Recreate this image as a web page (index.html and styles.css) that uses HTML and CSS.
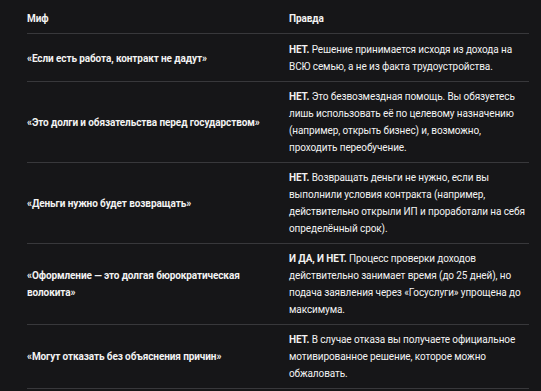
FILE: index.html
```html
<!DOCTYPE html>
<html lang="ru">
<head>
<meta charset="utf-8">
<link rel="stylesheet" href="styles.css">
</head>
<body>
<div class="wrap">
<table class="myths">
<thead>
<tr><th class="c1">Миф</th><th class="c2">Правда</th></tr>
</thead>
<tbody>
<tr><td class="c1">«Если есть работа, контракт не дадут»</td><td class="c2"><b>НЕТ.</b> Решение принимается исходя из дохода на ВСЮ семью, а не из факта трудоустройства.</td></tr>
<tr><td class="c1">«Это долги и обязательства перед государством»</td><td class="c2"><b>НЕТ.</b> Это безвозмездная помощь. Вы обязуетесь лишь использовать её по целевому назначению (например, открыть бизнес) и, возможно, проходить переобучение.</td></tr>
<tr><td class="c1">«Деньги нужно будет возвращать»</td><td class="c2"><b>НЕТ.</b> Возвращать деньги не нужно, если вы выполнили условия контракта (например, действительно открыли ИП и проработали на себя определённый срок).</td></tr>
<tr><td class="c1">«Оформление — это долгая бюрократическая волокита»</td><td class="c2"><b>И ДА, И НЕТ.</b> Процесс проверки доходов действительно занимает время (до 25 дней), но подача заявления через «Госуслуги» упрощена до максимума.</td></tr>
<tr><td class="c1">«Могут отказать без объяснения причин»</td><td class="c2"><b>НЕТ.</b> В случае отказа вы получаете официальное мотивированное решение, которое можно обжаловать.</td></tr>
</tbody>
</table>
</div>
</body>
</html>
```
FILE: styles.css
```css
html, body {
  margin: 0;
  background: #161618;
}
body {
  font-family: Roboto, "Noto Sans", sans-serif;
  font-size: 10px;
  line-height: 17px;
  letter-spacing: -0.1px;
  color: #f2f2f2;
}
.wrap {
  padding: 4px 12px 0 27px;
}
.myths {
  border-collapse: collapse;
  width: 502px;
  table-layout: fixed;
}
.myths th, .myths td {
  text-align: left;
  padding: 6px 0;
  border-bottom: 1px solid #38383b;
  vertical-align: middle;
}
.myths tbody tr:first-child td {
  padding-top: 7px;
}
.myths th {
  font-weight: 700;
}
.myths .c1 {
  width: 238px;
  font-weight: 700;
  padding-right: 12px;
}
.myths .c2 {
  padding-left: 12px;
}
.myths b {
  font-weight: 700;
}
```
